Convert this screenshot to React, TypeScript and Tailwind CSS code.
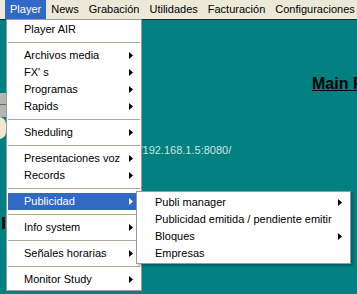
import React from "react";

type Item = { label: string; arrow?: boolean; active?: boolean } | "sep";

const topMenu = [
  "Player",
  "News",
  "Grabación",
  "Utilidades",
  "Facturación",
  "Configuraciones",
];

const playerItems: Item[] = [
  { label: "Player AIR" },
  "sep",
  { label: "Archivos media", arrow: true },
  { label: "FX' s", arrow: true },
  { label: "Programas", arrow: true },
  { label: "Rapids", arrow: true },
  "sep",
  { label: "Sheduling", arrow: true },
  "sep",
  { label: "Presentaciones voz", arrow: true },
  { label: "Records", arrow: true },
  "sep",
  { label: "Publicidad", arrow: true, active: true },
  "sep",
  { label: "Info system", arrow: true },
  "sep",
  { label: "Señales horarias", arrow: true },
  "sep",
  { label: "Monitor Study", arrow: true },
];

const publiItems: Item[] = [
  { label: "Publi manager", arrow: true },
  { label: "Publicidad emitida / pendiente emitir" },
  { label: "Bloques", arrow: true },
  { label: "Empresas" },
];

function Arrow({ white }: { white?: boolean }) {
  return (
    <svg width="4" height="7" viewBox="0 0 4 7" className="shrink-0">
      <polygon points="0,0 4,3.5 0,7" fill={white ? "#ffffff" : "#000000"} />
    </svg>
  );
}

function MenuList({ items, indent }: { items: Item[]; indent: string }) {
  return (
    <>
      {items.map((it, idx) =>
        it === "sep" ? (
          <div key={idx} className="flex h-[9px] items-center">
            <div className="h-px w-full bg-[#aca899]" />
          </div>
        ) : (
          <div
            key={idx}
            className={`flex h-[17px] items-center justify-between pr-[7px] ${indent} ${
              it.active ? "bg-[#316ac5] text-white" : "text-black"
            }`}
          >
            <span className="whitespace-nowrap leading-none">{it.label}</span>
            {it.arrow && <Arrow white={it.active} />}
          </div>
        )
      )}
    </>
  );
}

export default function App() {
  return (
    <div className="relative h-[294px] w-[357px] overflow-hidden bg-[#008080] font-['Liberation_Sans',Arial,sans-serif] text-[11px]">
      {/* menu bar */}
      <div className="flex h-[20px] border-b border-[#1c2b2b] bg-[#ece9d8] pl-[5px]">
        {topMenu.map((m, i) => (
          <div
            key={m}
            className={`h-[19px] whitespace-nowrap px-[5px] leading-[19px] ${
              i === 0 ? "bg-[#316ac5] text-white" : "text-black"
            }`}
          >
            {m}
          </div>
        ))}
      </div>

      {/* page behind the menus */}
      <div className="ml-[312px] mt-[55px] whitespace-nowrap text-[16px] leading-[18px] font-bold text-black underline">
        Main Page
      </div>
      <div className="ml-[115px] mt-[51px] whitespace-nowrap leading-[13px] text-[#cfe4e4]">
        http://192.168.1.5:8080/
      </div>

      {/* bits of a picture peeking out at the left edge */}
      <div className="absolute left-0 top-[93px] h-[24px] w-[6px] bg-[#b4b4b0]" />
      <div className="absolute left-0 top-[104px] h-px w-[6px] bg-[#6a6a6a]" />
      <div className="absolute left-[-8px] top-[117px] h-[22px] w-[14px] rounded-full bg-[#efe9cf]" />
      <div className="absolute left-[2px] top-[217px] h-[12px] w-[3px] bg-[#111]" />

      {/* Player dropdown */}
      <div className="absolute left-[6px] top-[19px] w-[136px] border border-[#9a9a96] bg-white px-px pb-[2px] pt-px">
        <MenuList items={playerItems} indent="pl-[16px]" />
      </div>

      {/* Publicidad submenu */}
      <div className="absolute left-[136px] top-[191px] w-[215px] border border-[#9a9a96] bg-white px-px pb-px pt-[2px] shadow-[2px_2px_2px_rgba(0,0,0,0.25)]">
        <MenuList items={publiItems} indent="pl-[17px]" />
      </div>
    </div>
  );
}
